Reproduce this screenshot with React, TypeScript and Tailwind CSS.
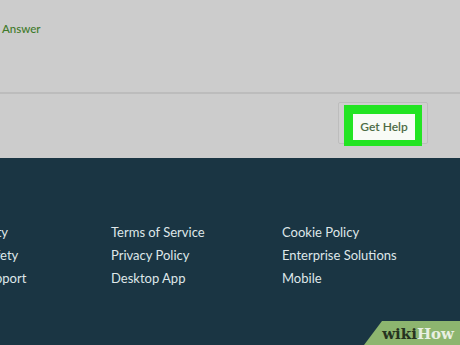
export default function App() {
  const cols = [
    ["Accessibility", "Trust & Safety", "Help & Support"],
    ["Terms of Service", "Privacy Policy", "Desktop App"],
    ["Cookie Policy", "Enterprise Solutions", "Mobile"],
  ];
  return (
    <div className="relative w-[460px] h-[345px] overflow-hidden bg-[#cccccc] flex flex-col" style={{ fontFamily: "Lato, 'Open Sans', sans-serif" }}>
      <div className="h-[92px] shrink-0 pl-[2px] pt-[15px]">
        <span className="text-[11.5px] leading-[16px] font-medium text-[#3f7a2a]">Answer</span>
      </div>
      <div className="h-[2px] shrink-0 bg-[#bcbcbc]" />
      <div className="h-[64px] shrink-0 flex justify-end items-start pr-[32px]">
        <div className="mt-[8px] w-[90px] h-[42px] border border-[#bdbdbd] rounded-[2px] bg-[#cfcfcf]">
          <div className="ml-[5px] mt-[2px] w-[78px] h-[41px] bg-[#22e422] pl-[9px] pt-[9px] pr-[7px] pb-[6px]">
            <div className="w-full h-full bg-[#f8fbf6] flex items-center justify-center">
              <span className="text-[12px] font-semibold text-[#4d6b45]">Get Help</span>
            </div>
          </div>
        </div>
      </div>
      <div className="flex-1 bg-[#1a3543] pt-[63px]">
        <div className="flex ml-[-62px]">
          {cols.map((c, i) => (
            <div key={i} className={i === 0 ? "w-[173px] shrink-0 flex flex-col" : "w-[171px] shrink-0 flex flex-col"}>
              {c.map((t) => (
                <div key={t} className="text-[13px] leading-[23px] text-[#dfe7e9] whitespace-nowrap">{t}</div>
              ))}
            </div>
          ))}
        </div>
      </div>
      <div className="absolute bottom-0 right-0 w-[96px] h-[24px] bg-[#8db56f] [clip-path:polygon(18px_0,100%_0,100%_100%,0_100%)] flex items-end justify-end pr-[6px] pb-[1px]">
        <span className="text-[15px] font-bold leading-[20px]" style={{ fontFamily: "'DejaVu Serif', serif" }}>
          <span className="text-[#26331f]">wiki</span>
          <span className="text-[#e8efe2]">How</span>
        </span>
      </div>
    </div>
  );
}
